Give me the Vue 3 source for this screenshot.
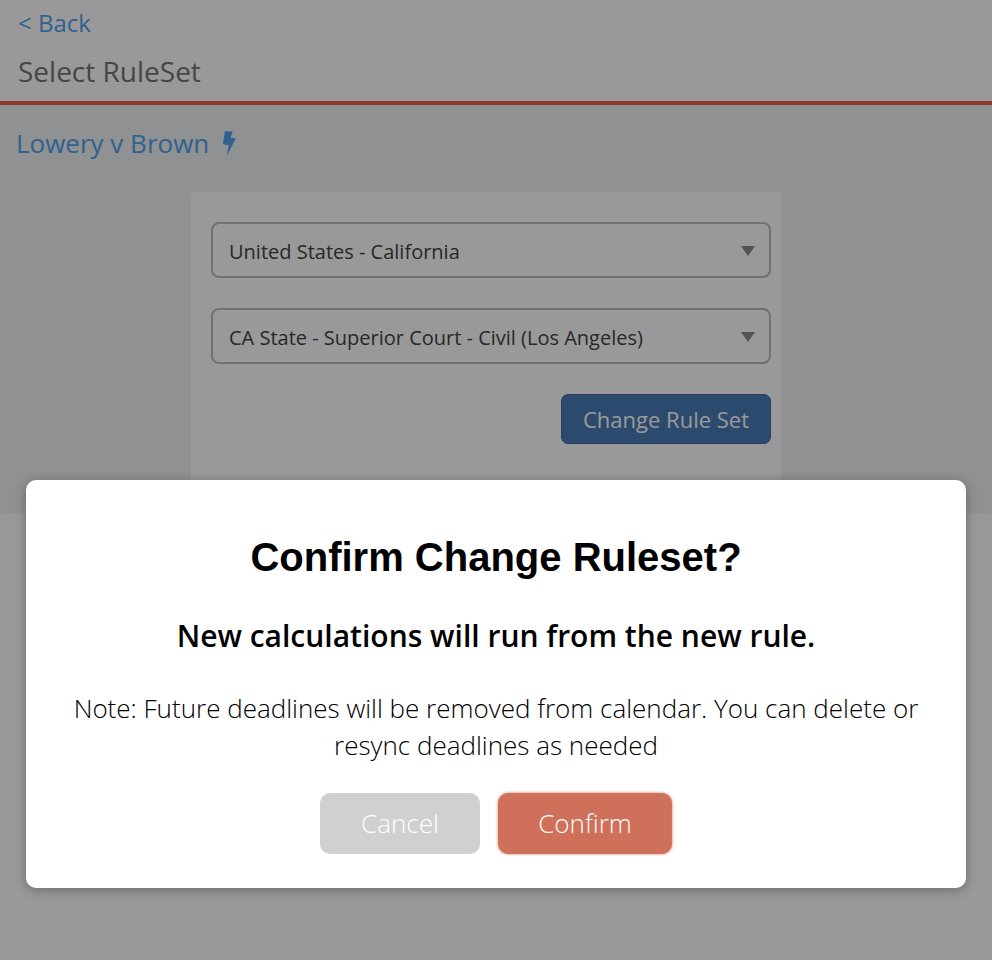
<template>
    <div class="page">
        <header class="top">
            <a class="back">&lt; Back</a>
            <h1 class="page-title">Select RuleSet</h1>
        </header>

        <section class="content">
            <div class="case-name">
                <span>Lowery v Brown</span>
                <svg class="bolt" viewBox="0 0 14 25" width="14" height="25">
                    <path d="M2.8 0.2 L10.6 0.6 L8.6 6.8 L13.9 7.3 L4.7 25 L6.8 13.9 L1 13.3 Z" fill="currentColor" />
                </svg>
            </div>

            <div class="panel">
                <div v-for="opt in selects" :key="opt" class="select">
                    <span>{{ opt }}</span>
                    <i class="caret"></i>
                </div>
                <div class="panel-actions">
                    <button class="change-btn">Change Rule Set</button>
                </div>
            </div>
        </section>

        <div class="overlay"></div>

        <div class="modal">
            <h2 class="modal-title">Confirm Change Ruleset?</h2>
            <p class="modal-sub">New calculations will run from the new rule.</p>
            <p class="modal-note">Note: Future deadlines will be removed from calendar. You can delete or resync deadlines as needed</p>
            <div class="modal-actions">
                <button class="btn cancel">Cancel</button>
                <button class="btn confirm">Confirm</button>
            </div>
        </div>
    </div>
</template>

<script setup>
const selects = [
    "United States - California",
    "CA State - Superior Court - Civil (Los Angeles)"
];
</script>

<style scoped>
.page {
    position: relative;
    width: 992px;
    height: 960px;
    overflow: hidden;
    background: #fff;
    font-family: "Open Sans", sans-serif;
}

.top {
    height: 105px;
    box-sizing: border-box;
    padding: 7px 18px 0;
    border-bottom: 4px solid #ef5c47;
}

.back {
    display: block;
    font-size: 24px;
    line-height: 32px;
    color: #4fa3ee;
}

.page-title {
    margin: 0;
    padding-top: 12px;
    font-size: 28px;
    line-height: 40px;
    font-weight: 400;
    color: #757575;
}

.content {
    height: 409px;
    box-sizing: border-box;
    background: #eff2f5;
    padding-top: 19px;
    overflow: hidden;
}

.case-name {
    display: flex;
    align-items: center;
    gap: 13px;
    padding-left: 16px;
    height: 38px;
    font-size: 26px;
    line-height: 38px;
    color: #4fa3ee;
}

.panel {
    width: 590px;
    height: 400px;
    box-sizing: border-box;
    margin: 30px 0 0 191px;
    padding: 30px 10px 0 20px;
    background: #fff;
    border-radius: 4px;
}

.select {
    display: flex;
    align-items: center;
    justify-content: space-between;
    height: 56px;
    box-sizing: border-box;
    margin-bottom: 30px;
    padding: 2px 14px 0 16px;
    border: 2px solid #bcbcbc;
    border-radius: 8px;
    font-size: 20px;
    color: #444;
}

.caret {
    width: 0;
    height: 0;
    border-left: 7.5px solid transparent;
    border-right: 7.5px solid transparent;
    border-top: 10px solid #8c8c8c;
}

.panel-actions {
    display: flex;
    justify-content: flex-end;
}

.change-btn {
    width: 210px;
    height: 50px;
    padding: 0;
    border: 1px solid #43699c;
    border-radius: 7px;
    background: #4a7cb8;
    color: #fff;
    font-family: inherit;
    font-size: 22px;
}

.overlay {
    position: absolute;
    inset: 0;
    background: rgba(0, 0, 0, 0.4);
}

.modal {
    position: absolute;
    left: 26px;
    top: 480px;
    width: 940px;
    height: 408px;
    box-sizing: border-box;
    padding-top: 52px;
    background: #fff;
    border-radius: 10px;
    box-shadow: 0 2px 12px rgba(0, 0, 0, 0.3);
    text-align: center;
}

.modal-title {
    margin: 0;
    font-family: "Liberation Sans", Arial, sans-serif;
    font-size: 40px;
    line-height: 50px;
    font-weight: 700;
    color: #000;
}

.modal-sub {
    margin: 34px 0 0;
    font-size: 30px;
    line-height: 40px;
    font-weight: 600;
    color: #000;
}

.modal-note {
    margin: 34px auto 0;
    width: 870px;
    font-size: 26px;
    line-height: 37px;
    font-weight: 300;
    color: #000;
}

.modal-actions {
    display: flex;
    justify-content: center;
    gap: 18px;
    margin-top: 29px;
}

.btn {
    height: 61px;
    padding: 0 0 2px;
    border: none;
    border-radius: 10px;
    color: #fff;
    font-family: inherit;
    font-size: 26px;
    font-weight: 300;
}

.cancel {
    width: 160px;
    background: #d0d0d0;
}

.confirm {
    width: 174px;
    background: #cf705a;
    border: 1px solid #d2755f;
    box-shadow: 0 0 3px rgba(200, 80, 50, 0.8);
}
</style>

<style>
html, body {
    margin: 0;
    background: #fff;
}
</style>
